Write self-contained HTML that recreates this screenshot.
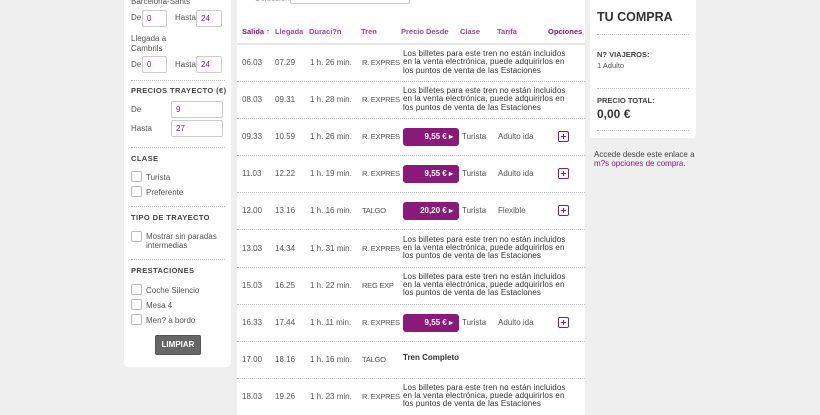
<!DOCTYPE html>
<html><head><meta charset="utf-8"><style>
*{margin:0;padding:0;box-sizing:border-box}
body{width:820px;height:407px;background:#efefef;font-family:"Liberation Sans",sans-serif;font-size:8px;color:#555;position:relative;overflow:hidden}
.a{position:absolute;white-space:nowrap}
.panel{position:absolute;background:#fff;border-radius:4px}
.inp{position:absolute;border:1px solid #ccc;background:#fff;color:#8a1a7a;font-size:8px;padding:3px 4px;border-radius:2px}
.dot{position:absolute;border-top:1px dotted #bbb;height:0}
.h{font-weight:bold;color:#444;font-size:7.5px;letter-spacing:.4px}
.cb{position:absolute;width:11px;height:11px;border:1px solid #bbb;border-radius:2px;background:#fff}
.btn{position:absolute;left:403px;width:56px;height:18px;background:#8a1a7a;border-radius:3px;color:#fff;font-weight:bold;font-size:8px;text-align:right;padding:4px 6px 0 0}
.plus{position:absolute;left:558px;width:11px;height:11px;border:1px solid #8a1a7a;border-radius:2px}
.plus:before{content:"";position:absolute;left:2px;top:4px;width:5px;height:1px;background:#8a1a7a}
.plus:after{content:"";position:absolute;left:4px;top:2px;width:1px;height:5px;background:#8a1a7a}
.msg{position:absolute;left:403px;font-size:8px;line-height:8.3px;color:#333;white-space:nowrap;letter-spacing:.1px}
.th{position:absolute;top:27px;color:#a0459a;font-size:7.5px;font-weight:bold}
</style></head><body>
<div class="panel" style="left:124px;top:-5px;width:107px;height:372px"></div>
<div class="a" style="left:131px;top:-3px">Barcelona-Sants</div>
<div class="a" style="left:131px;top:13px">De</div><div class="inp" style="left:142px;top:10px;width:25px;height:17px">0</div>
<div class="a" style="left:175px;top:13px">Hasta</div><div class="inp" style="left:196px;top:10px;width:26px;height:17px">24</div>
<div class="a" style="left:131px;top:34px">Llegada a</div>
<div class="a" style="left:131px;top:44px">Cambrils</div>
<div class="a" style="left:131px;top:60px">De</div><div class="inp" style="left:142px;top:56px;width:25px;height:17px">0</div>
<div class="a" style="left:175px;top:60px">Hasta</div><div class="inp" style="left:196px;top:56px;width:26px;height:17px">24</div>
<div class="dot" style="left:131px;top:80px;width:94px"></div>
<div class="a h" style="left:131px;top:86px">PRECIOS TRAYECTO (€)</div>
<div class="a" style="left:131px;top:105px">De</div><div class="inp" style="left:171px;top:101px;width:52px;height:17px">9</div>
<div class="a" style="left:131px;top:124px">Hasta</div><div class="inp" style="left:171px;top:120px;width:52px;height:17px">27</div>
<div class="dot" style="left:131px;top:147px;width:94px"></div>
<div class="a h" style="left:131px;top:154px">CLASE</div>
<div class="cb" style="left:131px;top:171px"></div><div class="a" style="left:146px;top:173px">Turista</div>
<div class="cb" style="left:131px;top:186px"></div><div class="a" style="left:146px;top:188px">Preferente</div>
<div class="dot" style="left:131px;top:206px;width:94px"></div>
<div class="a h" style="left:131px;top:213px">TIPO DE TRAYECTO</div>
<div class="cb" style="left:131px;top:231px"></div><div class="a" style="left:146px;top:232px;line-height:9px">Mostrar sin paradas<br>intermedias</div>
<div class="dot" style="left:131px;top:259px;width:94px"></div>
<div class="a h" style="left:131px;top:266px">PRESTACIONES</div>
<div class="cb" style="left:131px;top:284px"></div><div class="a" style="left:146px;top:286px">Coche Silencio</div>
<div class="cb" style="left:131px;top:299px"></div><div class="a" style="left:146px;top:301px">Mesa 4</div>
<div class="cb" style="left:131px;top:314px"></div><div class="a" style="left:146px;top:316px">Men? a bordo</div>
<div class="a" style="left:155px;top:335px;width:46px;height:20px;background:#666;border:1px solid #555;border-radius:2px;color:#fff;font-weight:bold;text-align:center;line-height:18px">LIMPIAR</div>
<div class="panel" style="left:237px;top:-5px;width:348px;height:420px;border-radius:0"></div>
<div class="a" style="left:255px;top:-6px;color:#999">Selecciona</div>
<div class="a" style="left:290px;top:-5px;width:120px;height:9px;border:1px solid #ccc;border-radius:2px;background:#fff"></div>
<div class="th" style="left:242px;color:#8a1a7a">Salida ↑</div>
<div class="th" style="left:275px">Llegada</div>
<div class="th" style="left:309px">Duraci?n</div>
<div class="th" style="left:361px">Tren</div>
<div class="th" style="left:401px">Precio Desde</div>
<div class="th" style="left:460px">Clase</div>
<div class="th" style="left:497px">Tarifa</div>
<div class="th" style="left:548px;color:#8a1a7a">Opciones</div>
<div class="a" style="left:237px;top:43px;width:348px;height:2px;background:#e6e6e6"></div>
<div id="rows"></div>
<script>
var R=[["06.03","07.29","1 h. 26 min.","R. EXPRES",0],["08.03","09.31","1 h. 28 min.","R. EXPRES",0],["09.33","10.59","1 h. 26 min.","R. EXPRES","9,55 €","Adulto ida"],["11.03","12.22","1 h. 19 min.","R. EXPRES","9,55 €","Adulto ida"],["12.00","13.16","1 h. 16 min.","TALGO","20,20 €","Flexible"],["13.03","14.34","1 h. 31 min.","R. EXPRES",0],["15.03","16.25","1 h. 22 min.","REG EXP",0],["16.33","17.44","1 h. 11 min.","R. EXPRES","9,55 €","Adulto ida"],["17.00","18.16","1 h. 16 min.","TALGO",1],["18.03","19.26","1 h. 23 min.","R. EXPRES",0]];
var h="";R.forEach(function(r,i){var c=63+i*37.1,t=c-5;
h+='<div class="a" style="left:242px;top:'+t+'px">'+r[0]+'</div><div class="a" style="left:275px;top:'+t+'px">'+r[1]+'</div><div class="a" style="left:310px;top:'+t+'px">'+r[2]+'</div><div class="a" style="left:362px;top:'+t+'px;font-size:7.6px;letter-spacing:-.3px">'+r[3]+'</div>';
if(r[4]===0)h+='<div class="msg" style="top:'+(c-13)+'px">Los billetes para este tren no están incluidos<br>en la venta electrónica, puede adquirirlos en<br>los puntos de venta de las Estaciones</div>';
else if(r[4]===1)h+='<div class="a" style="left:403px;top:'+(t-2)+'px;font-weight:bold;color:#333">Tren Completo</div>';
else h+='<div class="btn" style="top:'+(c-9)+'px">'+r[4]+' ▸</div><div class="a" style="left:462px;top:'+t+'px">Turista</div><div class="a" style="left:498px;top:'+t+'px">'+r[5]+'</div><div class="plus" style="top:'+(c-6)+'px"></div>';
if(i<9)h+='<div class="dot" style="left:237px;top:'+(c+18)+'px;width:348px"></div>';});
document.getElementById("rows").innerHTML=h;
</script>
<div class="panel" style="left:590px;top:-5px;width:106px;height:143px"></div>
<div class="a" style="left:597px;top:10px;font-size:12.5px;font-weight:bold;color:#333">TU COMPRA</div>
<div class="dot" style="left:597px;top:34px;width:92px"></div>
<div class="a" style="left:597px;top:50px;font-weight:bold;color:#444;font-size:7.5px">N? VIAJEROS:</div>
<div class="a" style="left:597px;top:61px;font-size:7.5px">1 Adulto</div>
<div class="dot" style="left:597px;top:88px;width:92px"></div>
<div class="a" style="left:597px;top:96px;font-weight:bold;color:#444;font-size:7.5px">PRECIO TOTAL:</div>
<div class="a" style="left:597px;top:107px;font-weight:bold;color:#333;font-size:12px">0,00 €</div>
<div class="dot" style="left:597px;top:130px;width:92px"></div>
<div class="a" style="left:594px;top:151px;line-height:8.5px;color:#444">Accede desde este enlace a<br><span style="color:#8a1a7a">m?s opciones de compra</span>.</div>
</body></html>
